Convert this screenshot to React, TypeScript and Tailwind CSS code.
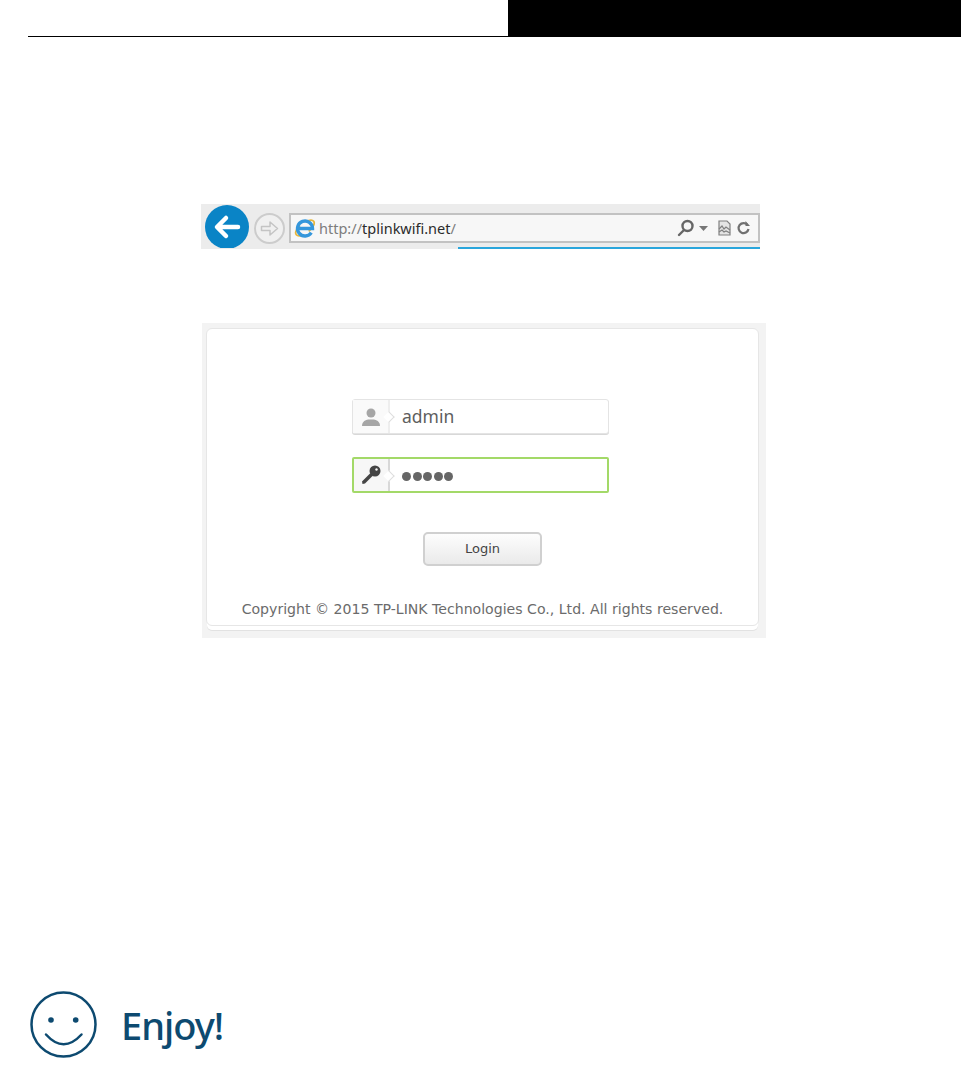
function IeLogo() {
  return (
    <svg width="22" height="22" viewBox="0 0 22 22" fill="none">
      <ellipse cx="11" cy="11" rx="11" ry="5" transform="rotate(-38 11 11)" stroke="#e6b63c" strokeWidth="1.800" strokeDasharray="12 7 17 7" />
      <path d="M17.300 15.600A7.500 7.500 0 1 1 18.500 11.500H5" stroke="#3597dc" strokeWidth="3.400" />
    </svg>
  );
}

function BrowserBar() {
  return (
    <div className="relative ml-[201px] mt-[167px] flex h-[45px] w-[559px] items-start bg-[#ececec]">
      <div className="ml-[4px] mt-[1px] flex h-[43px] w-[44px] items-start justify-center overflow-hidden">
        <div className="flex h-[44px] w-[44px] shrink-0 items-center justify-center rounded-full bg-[#0a84c6]">
          <svg width="28" height="26" viewBox="0 0 28 26" fill="none" stroke="#fff" strokeWidth="4.500" strokeLinecap="round" strokeLinejoin="round">
            <path d="M25 13H5M13 4l-9 9 9 9" />
          </svg>
        </div>
      </div>
      <div className="ml-[5px] mt-[9px] flex h-[31px] w-[31px] items-center justify-center rounded-full border-2 border-[#cccccc] bg-[#f0f0f0]">
        <svg width="19" height="17" viewBox="0 0 19 17" fill="none" stroke="#c4c4c4" strokeWidth="1.500" strokeLinejoin="round">
          <path d="M1.500 6.500h8.500V2l7.500 6.500-7.500 6.500v-4.500H1.500z" />
        </svg>
      </div>
      <div className="ml-[4px] mt-[9px] flex h-[30px] w-[471px] items-center border-2 border-[#c2c2c2] bg-[#f7f7f7] pl-[3px] pr-[7px]">
        <IeLogo />
        <span className="ml-[3px] mt-[1px] whitespace-nowrap font-['Noto_Sans',sans-serif] text-[14.500px] text-[#7d7d7d]">
          http://<span className="text-[#2b2b2b]">tplinkwifi.net</span>/
        </span>
        <div className="ml-auto flex items-center">
          <svg width="18" height="18" viewBox="0 0 18 18" fill="none" stroke="#666" strokeWidth="2.400" strokeLinecap="round">
            <circle cx="10.500" cy="7" r="5" />
            <path d="M7 11l-5 5" />
          </svg>
          <svg className="ml-[4px]" width="9" height="5" viewBox="0 0 9 5" fill="#777">
            <path d="M0 0h9L4.500 5z" />
          </svg>
          <svg className="ml-[10px]" width="13" height="16" viewBox="0 0 13 16" fill="#e4e4e4" stroke="#808080" strokeWidth="1.200">
            <path d="M1 1h8l3 3v11H1z" />
            <path d="M1 9l3-3 2 3 2-2 4 3M1 12l3-2 2 2 2-1 4 2" fill="none" />
          </svg>
          <svg className="ml-[5px]" width="15" height="16" viewBox="0 0 15 16" fill="none" stroke="#707070" strokeWidth="2.200">
            <path d="M11.500 5a5 5 0 1 0 1 4" />
            <path d="M9.500 1v5h4.500z" fill="#707070" stroke="none" />
          </svg>
        </div>
      </div>
      <div className="absolute bottom-0 left-[257px] h-[2px] w-[302px] bg-[#2aa6dc]" />
    </div>
  );
}

function LoginField({ active, icon, children }: { active?: boolean; icon: React.ReactNode; children: React.ReactNode }) {
  return (
    <div className={active ? 'flex h-[36px] w-[257px] rounded-[2px] border-2 border-[#a3d968] bg-white' : 'flex h-[35px] w-[257px] rounded-[3px] border border-[#e4e4e4] bg-white shadow-[0_1px_0_#d8d8d8]'}>
      <div className={active ? 'relative flex w-[36px] items-center justify-center border-r-2 border-[#d8d8d8] bg-[#f7f7f7]' : 'relative flex w-[37px] items-center justify-center border-r-2 border-[#eeeeee] bg-[#fafafa]'}>
        {icon}
        <div className="absolute right-[-5px] top-[13px] h-[8px] w-[8px] rotate-45 border-r border-t border-[#dddddd] bg-white" />
      </div>
      {children}
    </div>
  );
}

function LoginPanel() {
  return (
    <div className="ml-[202px] mt-[74px] h-[315px] w-[564px] bg-[#f3f3f3] pl-[4px] pt-[5px]">
      <div className="flex h-[298px] w-[553px] flex-col items-center rounded-[6px] border border-[#e6e6e6] bg-white shadow-[0_5px_0_-1px_#ffffff,0_6px_0_-1px_#e2e2e2]">
        <div className="mt-[70px] mr-[4px]">
          <LoginField
            icon={
              <svg width="20" height="18" viewBox="0 0 20 18" fill="#a6a6a6">
                <circle cx="10" cy="5" r="4.500" />
                <path d="M1 18c0-5 4-6 6-6.500h6c2 .5 6 1.500 6 6.500z" />
              </svg>
            }
          >
            <span className="ml-[12px] self-center font-['Noto_Sans',sans-serif] text-[17.500px] text-[#5e5e5e]">admin</span>
          </LoginField>
        </div>
        <div className="mt-[23px] mr-[4px]">
          <LoginField
            active
            icon={
              <svg width="20" height="20" viewBox="0 0 20 20" fill="#454545">
                <circle cx="14" cy="6" r="5.500" />
                <path d="M9.500 8l2.500 2.500L4 18.500 1.500 19 1 16.500z" />
                <circle cx="15.500" cy="4.500" r="1.200" fill="#f7f7f7" />
              </svg>
            }
          >
            <div className="ml-[12px] mt-[3px] flex items-center gap-[1.500px] self-center">
              <span className="h-[9px] w-[9px] rounded-full bg-[#666]" />
              <span className="h-[9px] w-[9px] rounded-full bg-[#666]" />
              <span className="h-[9px] w-[9px] rounded-full bg-[#666]" />
              <span className="h-[9px] w-[9px] rounded-full bg-[#666]" />
              <span className="h-[9px] w-[9px] rounded-full bg-[#666]" />
            </div>
          </LoginField>
        </div>
        <div className="mt-[39px] flex h-[34px] w-[119px] items-center justify-center rounded-[5px] border-2 border-[#d0d0d0] bg-gradient-to-b from-[#fdfdfd] to-[#eaeaea] font-['DejaVu_Sans',sans-serif] text-[13px] text-[#444]">
          Login
        </div>
        <div className="mt-[33px] whitespace-nowrap font-['DejaVu_Sans',sans-serif] text-[14.100px] leading-[20px] text-[#6b6b6b]">
          Copyright © 2015 TP-LINK Technologies Co., Ltd. All rights reserved.
        </div>
      </div>
    </div>
  );
}

function Enjoy() {
  return (
    <div className="ml-[30px] mt-[353px] flex items-center">
      <svg width="68" height="68" viewBox="0 0 68 68" fill="none" stroke="#0d4a70" strokeWidth="2.500">
        <circle cx="33.500" cy="33.500" r="32" />
        <circle cx="21" cy="29" r="2.800" fill="#0d4a70" stroke="none" />
        <circle cx="45.700" cy="29" r="2.800" fill="#0d4a70" stroke="none" />
        <path d="M16 43.500Q33.500 63 51.500 43.500" strokeLinecap="round" />
      </svg>
      <span className="ml-[23px] font-['Noto_Sans',sans-serif] text-[38px] font-medium leading-[50px] tracking-[-1px] text-[#0d4a70]">Enjoy!</span>
    </div>
  );
}

export default function App() {
  return (
    <div className="h-[1071px] w-[961px] overflow-hidden bg-white">
      <div className="flex h-[37px] items-end pl-[28px]">
        <div className="h-px w-[480px] bg-black" />
        <div className="h-[37px] flex-1 bg-black" />
      </div>
      <BrowserBar />
      <LoginPanel />
      <Enjoy />
    </div>
  );
}
